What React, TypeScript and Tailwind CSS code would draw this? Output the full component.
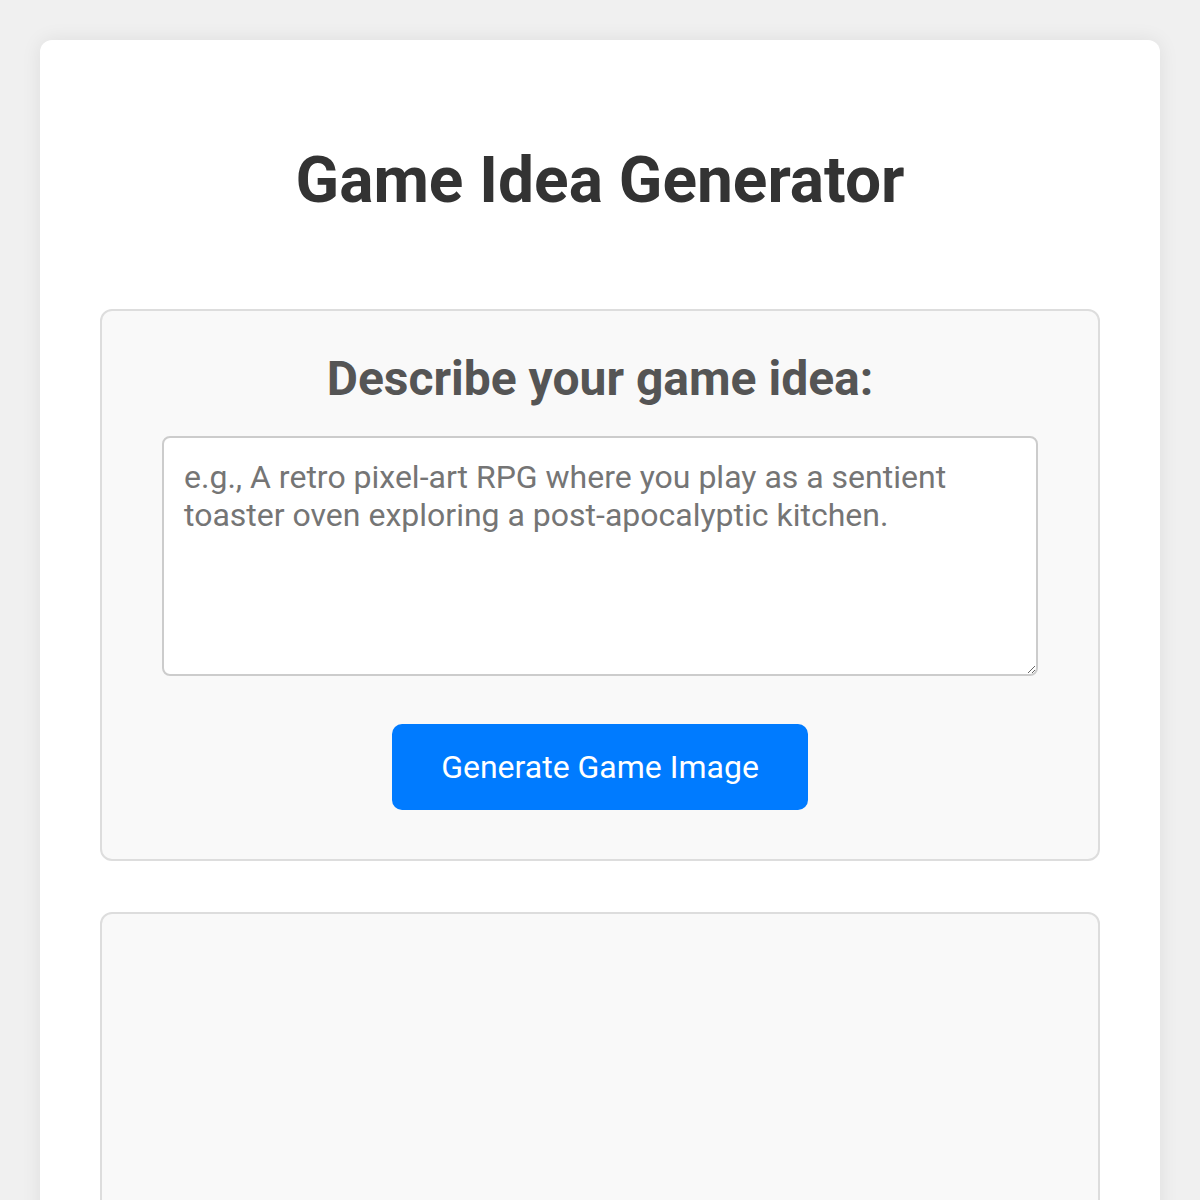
import React from "react";

export default function App() {
  return (
    <div
      className="min-h-screen bg-[#f0f0f0] p-10"
      style={{ fontFamily: "Roboto, 'Noto Sans', sans-serif" }}
    >
      <div className="rounded-[12px] bg-white px-[60px] pt-[60px] pb-[60px] shadow-[0_0_20px_rgba(0,0,0,0.08)]">
        <h1 className="mt-[43px] mb-[91px] text-center text-[64px] font-bold leading-[75px] text-[#333]">
          Game Idea Generator
        </h1>
        <div className="rounded-[12px] border-2 border-[#ddd] bg-[#f9f9f9] px-[60px] pt-[40px] pb-[49px]">
          <h2 className="mb-[29px] text-center text-[48px] font-bold leading-[56px] text-[#555]">
            Describe your game idea:
          </h2>
          <textarea
            className="block h-[240px] w-full rounded-[8px] border-2 border-[#ccc] bg-white px-[20px] pt-[20px] pb-[18px] text-[32px] leading-[38px] text-[#333] placeholder:text-[#757575] outline-none"
            placeholder="e.g., A retro pixel-art RPG where you play as a sentient toaster oven exploring a post-apocalyptic kitchen."
          />
          <div className="mt-[48px] flex justify-center">
            <button className="h-[86px] w-[416px] rounded-[10px] bg-[#007bff] text-[32px] leading-[38px] text-white">
              Generate Game Image
            </button>
          </div>
        </div>
        <div className="mt-[51px] h-[500px] rounded-[12px] border-2 border-[#ddd] bg-[#f9f9f9]" />
      </div>
    </div>
  );
}
